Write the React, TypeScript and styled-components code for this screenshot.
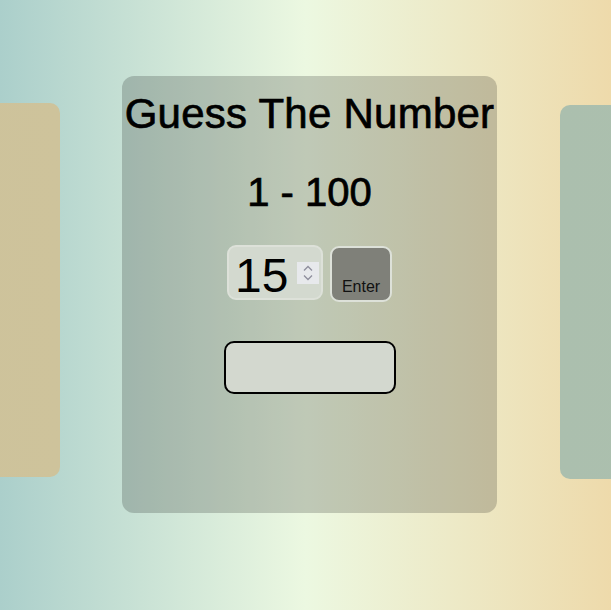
import React, { useState } from "react";
import styled, { createGlobalStyle } from "styled-components";

const GlobalStyle = createGlobalStyle`
  html, body {
    margin: 0;
    padding: 0;
  }
  body {
    font-family: "Liberation Sans", Arial, sans-serif;
    background: linear-gradient(to right, #abcfcb 0%, #ecf8e1 50%, #eedaab 100%);
    min-height: 100vh;
    overflow: hidden;
  }
`;

const Page = styled.main`
  min-height: 100vh;
  padding-top: 76px;
  box-sizing: border-box;
  overflow: hidden;
`;

const Track = styled.div`
  display: grid;
  grid-template-columns: 321px 375px 321px;
  column-gap: 62px;
  justify-content: center;
  align-items: start;
  padding-left: 8px;
`;

const SideCard = styled.div<{ $top: number; $bg: string; $shift: number }>`
  height: 374px;
  margin-top: ${(p) => p.$top}px;
  margin-left: ${(p) => p.$shift}px;
  border-radius: 10px;
  background: ${(p) => p.$bg};
`;

const Card = styled.section`
  height: 437px;
  border-radius: 12px;
  background: rgba(0, 0, 0, 0.19);
  display: flex;
  flex-direction: column;
  align-items: center;
  padding-top: 17px;
  box-sizing: border-box;
  color: #000;
`;

const Title = styled.h1`
  margin: 0;
  font-size: 42px;
  line-height: 42px;
  font-weight: 400;
  letter-spacing: 0.25px;
  white-space: nowrap;
  -webkit-text-stroke: 0.7px #000;
`;

const Range = styled.h2`
  margin: 37px 0 0;
  font-size: 40px;
  line-height: 40px;
  font-weight: 400;
  white-space: nowrap;
  -webkit-text-stroke: 0.7px #000;
`;

const Row = styled.div`
  margin-top: 33px;
  display: flex;
  align-items: flex-start;
  gap: 7px;
`;

const NumberBox = styled.div`
  width: 96px;
  height: 55px;
  box-sizing: border-box;
  border: 2px solid #dde1d9;
  border-radius: 9px;
  background: #d3d9cf;
  display: flex;
  align-items: center;
  padding-right: 2px;
`;

const NumberField = styled.input`
  flex: 1;
  min-width: 0;
  height: 51px;
  box-sizing: border-box;
  padding: 6px 0 0 6px;
  border: none;
  outline: none;
  background: transparent;
  font-family: "Liberation Sans", Arial, sans-serif;
  font-size: 48px;
  line-height: 45px;
  color: #000;
  appearance: textfield;
  -moz-appearance: textfield;
  &::-webkit-inner-spin-button,
  &::-webkit-outer-spin-button {
    -webkit-appearance: none;
    margin: 0;
  }
`;

const Spinner = styled.div`
  width: 22px;
  height: 22px;
  background: #e7e9ec;
  display: flex;
  flex-direction: column;
  align-items: center;
  justify-content: center;
  gap: 2px;
`;

const EnterButton = styled.button`
  margin-top: 1px;
  width: 62px;
  height: 56px;
  box-sizing: border-box;
  border: 2px solid #dde1d9;
  border-radius: 9px;
  background: #7f8079;
  display: flex;
  flex-direction: column;
  justify-content: flex-end;
  align-items: center;
  padding: 0 0 4px;
  font-family: "Liberation Sans", Arial, sans-serif;
  font-size: 16px;
  line-height: 18px;
  color: #111;
  cursor: pointer;
`;

const Output = styled.div`
  margin-top: 39px;
  width: 172px;
  height: 53px;
  box-sizing: border-box;
  border: 2px solid #000;
  border-radius: 10px;
  background: #d3d8cf;
`;

const Chevron = ({ up }: { up?: boolean }) => (
  <svg width="10" height="7" viewBox="0 0 10 7" fill="none">
    <path
      d={up ? "M1 5.5 L5 1.5 L9 5.5" : "M1 1.5 L5 5.5 L9 1.5"}
      stroke="#8e8e9c"
      strokeWidth="1.3"
    />
  </svg>
);

export default function App() {
  const [value, setValue] = useState("15");
  return (
    <>
      <GlobalStyle />
      <Page>
        <Track>
          <SideCard $top={27} $shift={0} $bg="linear-gradient(to right, #cbc19c, #cec39b)" />
          <Card>
            <Title>Guess The Number</Title>
            <Range>1 - 100</Range>
            <Row>
              <NumberBox>
                <NumberField
                  type="number"
                  value={value}
                  onChange={(e) => setValue(e.target.value)}
                />
                <Spinner>
                  <Chevron up />
                  <Chevron />
                </Spinner>
              </NumberBox>
              <EnterButton>Enter</EnterButton>
            </Row>
            <Output />
          </Card>
          <SideCard $top={29} $shift={1} $bg="linear-gradient(to right, #abbfae, #aec0ad)" />
        </Track>
      </Page>
    </>
  );
}
